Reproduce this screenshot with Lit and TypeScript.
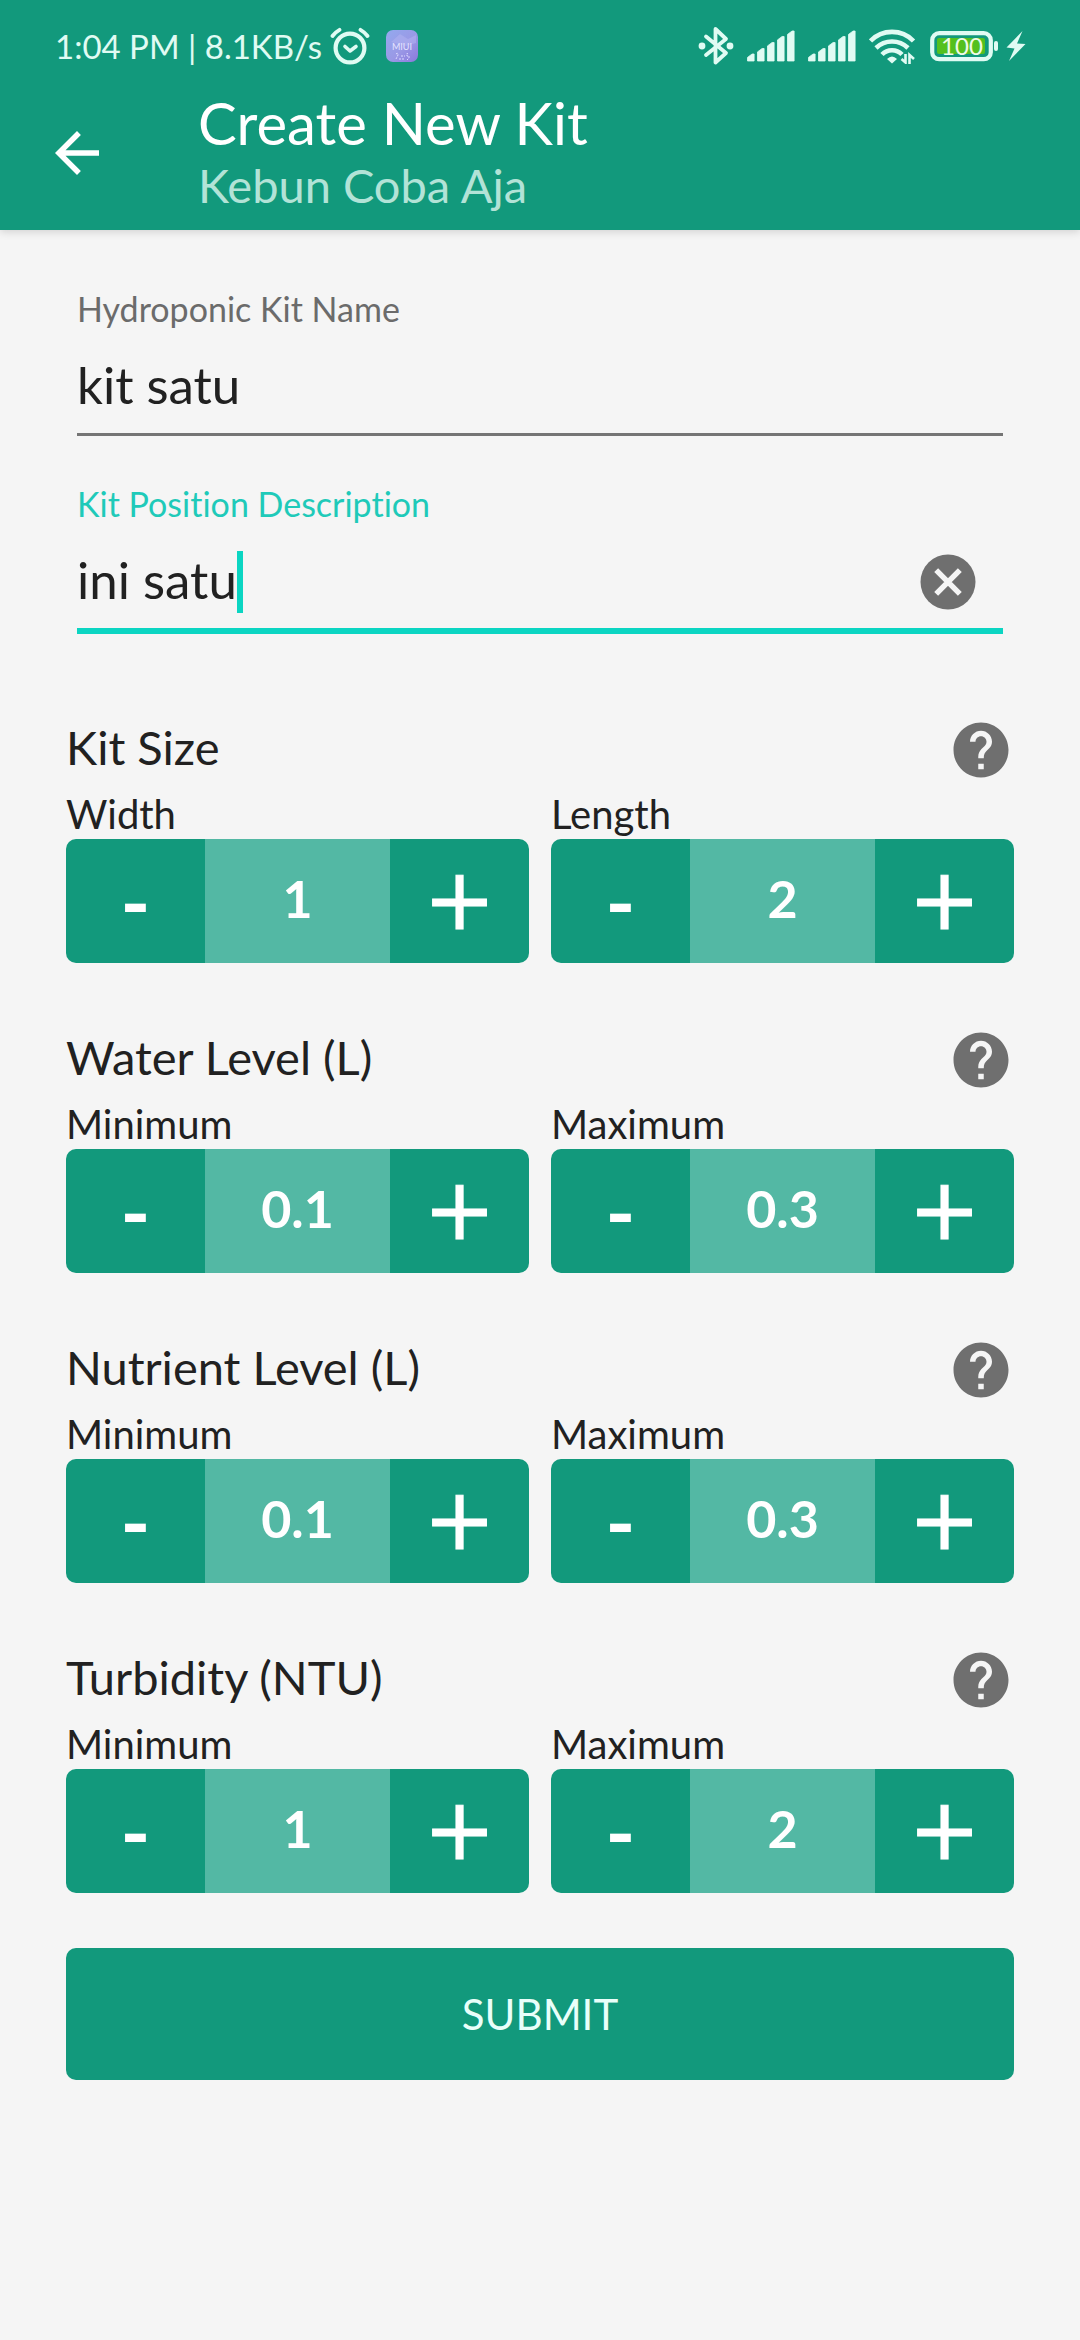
import { LitElement, html, css, svg, nothing } from "lit";
import { customElement, property, state } from "lit/decorators.js";
import { classMap } from "lit/directives/class-map.js";

/* Shared control reset */
const reset = css`
  * {
    box-sizing: border-box;
  }
  svg {
    display: block;
    flex: none;
  }
  button,
  input {
    margin: 0;
    padding: 0;
    border: 0;
    outline: 0;
    background: none;
    color: inherit;
    font: inherit;
  }
  button {
    cursor: pointer;
  }
`;

@customElement("status-bar")
class StatusBar extends LitElement {
  static styles = [
    reset,
    css`
      :host {
        display: flex;
        align-items: center;
        height: 76px;
        padding: 16px 54px 0 55px;
        color: #e0fbf3;
        font-size: 33px;
        line-height: 40px;
      }
      .alarm {
        margin-left: 8px;
      }
      .app {
        margin-left: 16px;
      }
      .right {
        display: flex;
        align-items: center;
        gap: 13px;
        margin-left: auto;
      }
      .power {
        display: flex;
        align-items: center;
        gap: 8px;
      }
      .glyph {
        font: 24px "Lato", sans-serif;
      }
      .tiny {
        font: 9px "Lato", sans-serif;
      }
    `,
  ];

  private signal() {
    return html`<svg width="48" height="32" viewBox="0 0 48 32" fill="currentColor" aria-hidden="true">
      ${[24, 18.5, 12.5, 6.5, 1].map((top, i) => {
        const x = i * 10 + 0.5;
        return svg`<path d="M${x} 31V${top + 3.4}L${x + 4.6} ${top}H${x + 6.6}V31Z" stroke="currentColor" stroke-width="0.8" stroke-linejoin="round" />`;
      })}
    </svg>`;
  }

  render() {
    return html`
      <span>1:04 PM | 8.1KB/s</span>
      <svg class="alarm" width="40" height="38" viewBox="0 0 40 38" fill="none" stroke="currentColor" stroke-linecap="round" aria-hidden="true">
        <circle cx="20" cy="21" r="14.4" stroke-width="4.2" />
        <path d="M15 19.5L20 24L26 19.5" stroke-width="3.6" stroke-linejoin="round" />
        <path d="M2.5 9Q5.5 5 9.5 2.8M30.5 2.8Q34.5 5 37.5 9" stroke-width="3.8" />
      </svg>
      <svg class="app" width="32" height="32" viewBox="0 0 32 32" aria-hidden="true">
        <defs>
          <linearGradient id="tile" x1="0" y1="0" x2="1" y2="1">
            <stop offset="0" stop-color="#93a9ee" />
            <stop offset="0.55" stop-color="#9a99e6" />
            <stop offset="1" stop-color="#8a78dc" />
          </linearGradient>
        </defs>
        <rect width="32" height="32" rx="7" fill="url(#tile)" />
        <path d="M5 12L14 4L22 9L30 5V13L20 16Z" fill="#b3b4f2" opacity="0.5" />
        <text class="tiny" x="16" y="20" text-anchor="middle" fill="#e6e4ff">MIUI</text>
        <path d="M10 24Q12 22 12 25L10 29M15 26H19M22 24Q20 22 21 26H23V28L21 30M13 29H19" fill="none" stroke="#dcd9ff" stroke-width="1" stroke-dasharray="2 1" />
      </svg>
      <div class="right">
        <svg width="36" height="40" viewBox="0 0 36 40" fill="none" stroke="currentColor" stroke-width="3.8" stroke-linejoin="round" stroke-linecap="round" aria-hidden="true">
          <path d="M8 10.5L28 27L17.5 36.5V3L28 13L8 29" />
          <circle cx="4" cy="20" r="3.4" fill="currentColor" stroke="none" />
          <circle cx="32" cy="20" r="3.4" fill="currentColor" stroke="none" />
        </svg>
        ${this.signal()} ${this.signal()}
        <svg width="48" height="36" viewBox="0 0 48 36" fill="none" stroke="currentColor" stroke-width="4.6" aria-hidden="true">
          <path d="M1.5 13A30 30 0 0 1 44.5 13" />
          <path d="M7 20A23 23 0 0 1 39 20" />
          <path d="M13 26.5A14 14 0 0 1 33 26.5" />
          <path d="M18 31Q23 26 28 31L23 35.5Z" fill="currentColor" stroke="none" />
          <path d="M36.5 26V34.5L32.5 31M40.5 36V27L45 31" stroke-width="2.6" />
        </svg>
        <div class="power">
          <svg width="68" height="32" viewBox="0 0 68 32" aria-label="Battery 100">
            <rect x="2.2" y="3.2" width="58.6" height="26" rx="7" fill="none" stroke="currentColor" stroke-width="4.2" />
            <rect x="64" y="11" width="4" height="10" rx="2" fill="currentColor" />
            <rect x="7" y="8" width="48" height="16" rx="2" fill="#54c01e" />
            <text class="glyph" x="32" y="25" text-anchor="middle" fill="#effbe9">100</text>
          </svg>
          <svg width="20" height="32" viewBox="0 0 20 32" fill="currentColor" aria-hidden="true">
            <path d="M16.5 1L0.5 17.5L8.5 18.5L3 31L19.5 14L11 13.5Z" />
          </svg>
        </div>
      </div>
    `;
  }
}

@customElement("text-field")
class TextField extends LitElement {
  @property() label = "";
  @property() value = "";
  @property({ type: Boolean, reflect: true }) active = false;

  static styles = [
    reset,
    css`
      :host {
        display: block;
      }
      .label {
        display: block;
        color: #6b6b6b;
        font-size: 34px;
        line-height: 42px;
      }
      .row {
        display: flex;
        align-items: center;
        box-sizing: content-box;
        height: 92px;
        padding: 11px 22px 0 0;
        border-bottom: 3px solid #757575;
      }
      .input {
        flex: 1;
        min-width: 0;
        padding-bottom: 4px;
        color: #212121;
        font-size: 51px;
        line-height: 62px;
      }
      .caret {
        width: 6px;
        height: 62px;
        background: #0bd5c2;
      }
      .clear {
        margin-left: auto;
        color: #6f6f6f;
      }
      .active .label {
        color: #1fcab9;
      }
      .active .row {
        border-bottom: 6px solid #0bd5c2;
      }
      .active .input {
        flex: none;
        field-sizing: content;
        caret-color: transparent;
      }
    `,
  ];

  render() {
    return html`<div class=${classMap({ active: this.active })}>
      <label class="label" for="text">${this.label}</label>
      <div class="row">
        <input
          id="text"
          class="input"
          type="text"
          .value=${this.value}
          @input=${(e: Event) => (this.value = (e.target as HTMLInputElement).value)}
        />
        ${this.active
          ? html`<span class="caret"></span>
              <button class="clear" type="button" aria-label="Clear" @click=${() => (this.value = "")}>
                <svg width="66" height="66" viewBox="0 0 24 24" fill="none" aria-hidden="true">
                  <circle cx="12" cy="12" r="10" fill="currentColor" />
                  <path d="M7.7 7.7L16.3 16.3M16.3 7.7L7.7 16.3" stroke="#f5f5f5" stroke-width="2" />
                </svg>
              </button>`
          : nothing}
      </div>
    </div>`;
  }
}

@customElement("number-stepper")
class NumberStepper extends LitElement {
  @property() label = "";
  @property({ type: Number }) value = 0;
  @property({ type: Number }) step = 1;

  static styles = [
    reset,
    css`
      :host {
        display: block;
        min-width: 0;
      }
      .label {
        display: block;
        padding: 7px 0 1px;
        color: #212121;
        font-size: 40px;
        line-height: 48px;
      }
      .stepper {
        display: grid;
        grid-template-columns: 3fr 4fr 3fr;
        height: 124px;
        border-radius: 10px;
        background: #12997c;
        color: #ffffff;
      }
      .value {
        min-width: 0;
        padding-bottom: 6px;
        background: #53b8a4;
        text-align: center;
        font-size: 52px;
        font-weight: 700;
      }
      .minus {
        font-size: 80px;
        font-weight: 700;
      }
      .plus {
        padding-bottom: 4px;
        font-family: "DejaVu Sans", sans-serif;
        font-size: 86px;
        -webkit-text-stroke: 1px currentColor;
      }
    `,
  ];

  private change(sign: number) {
    this.value = Math.max(0, Math.round((this.value + sign * this.step) * 10) / 10);
  }

  render() {
    return html`
      <label class="label" for="value">${this.label}</label>
      <div class="stepper">
        <button class="minus" type="button" aria-label="Decrease" @click=${() => this.change(-1)}>-</button>
        <input
          id="value"
          class="value"
          inputmode="decimal"
          .value=${String(this.value)}
          @change=${(e: Event) => (this.value = Number((e.target as HTMLInputElement).value) || 0)}
        />
        <button class="plus" type="button" aria-label="Increase" @click=${() => this.change(1)}>+</button>
      </div>
    `;
  }
}

interface Range {
  title: string;
  step: number;
  items: { label: string; value: number }[];
}

@customElement("app-root")
class AppRoot extends LitElement {
  @state() private ranges: Range[] = [
    { title: "Kit Size", step: 1, items: [{ label: "Width", value: 1 }, { label: "Length", value: 2 }] },
    { title: "Water Level (L)", step: 0.1, items: [{ label: "Minimum", value: 0.1 }, { label: "Maximum", value: 0.3 }] },
    { title: "Nutrient Level (L)", step: 0.1, items: [{ label: "Minimum", value: 0.1 }, { label: "Maximum", value: 0.3 }] },
    { title: "Turbidity (NTU)", step: 1, items: [{ label: "Minimum", value: 1 }, { label: "Maximum", value: 2 }] },
  ];

  static styles = [
    reset,
    css`
      :host {
        display: block;
        min-height: 100vh;
        background: #f5f5f5;
        color: #212121;
        font-family: "Lato", "Open Sans", sans-serif;
        font-variant-ligatures: none;
      }
      .header {
        background: #12997c;
        color: #ffffff;
        box-shadow: 0 2px 8px rgba(0, 0, 0, 0.14);
      }
      .toolbar {
        display: flex;
        align-items: center;
        gap: 88px;
        height: 154px;
        padding: 0 44px;
      }
      .title,
      .subtitle {
        margin: 0;
        font-weight: 400;
      }
      .title {
        font-size: 58px;
        line-height: 64px;
      }
      .subtitle {
        color: #b2e3d7;
        font-size: 47px;
        line-height: 60px;
      }
      .form {
        padding: 58px 66px;
      }
      .fields {
        display: grid;
        gap: 47px;
        padding: 0 11px;
      }
      .sections {
        display: grid;
        gap: 64px;
        margin: 83px 0 55px;
      }
      .heading {
        display: flex;
        align-items: flex-start;
        justify-content: space-between;
      }
      .name {
        margin: 0;
        font-size: 47px;
        font-weight: 400;
        line-height: 60px;
      }
      .help {
        color: #6f6f6f;
      }
      .pair {
        display: grid;
        grid-template-columns: 1fr 1fr;
        gap: 22px;
      }
      .submit {
        display: block;
        width: 100%;
        height: 132px;
        border-radius: 10px;
        background: #12997c;
        color: #e9fffa;
        font-size: 42px;
      }
    `,
  ];

  render() {
    return html`
      <header class="header">
        <status-bar></status-bar>
        <div class="toolbar">
          <button type="button" aria-label="Back">
            <svg width="66" height="66" viewBox="0 0 24 24" fill="currentColor" aria-hidden="true">
              <path d="M20 11H7.83l5.59-5.59L12 4l-8 8 8 8 1.41-1.41L7.83 13H20v-2z" />
            </svg>
          </button>
          <div>
            <h1 class="title">Create New Kit</h1>
            <p class="subtitle">Kebun Coba Aja</p>
          </div>
        </div>
      </header>
      <form class="form" @submit=${(e: Event) => e.preventDefault()}>
        <div class="fields">
          <text-field label="Hydroponic Kit Name" value="kit satu"></text-field>
          <text-field label="Kit Position Description" value="ini satu" active></text-field>
        </div>
        <div class="sections">
          ${this.ranges.map(
            (range) => html`<section>
              <div class="heading">
                <h2 class="name">${range.title}</h2>
                <button class="help" type="button" aria-label="Help">
                  <svg width="66" height="66" viewBox="0 0 24 24" fill="currentColor" aria-hidden="true">
                    <path
                      d="M12 2C6.48 2 2 6.48 2 12s4.48 10 10 10 10-4.48 10-10S17.52 2 12 2zm1 17h-2v-2h2v2zm2.07-7.75l-.9.92C13.45 12.9 13 13.5 13 15h-2v-.5c0-1.1.45-2.1 1.17-2.83l1.24-1.26c.37-.36.59-.86.59-1.41 0-1.1-.9-2-2-2s-2 .9-2 2H8c0-2.21 1.79-4 4-4s4 1.79 4 4c0 .88-.36 1.68-.93 2.25z"
                    />
                  </svg>
                </button>
              </div>
              <div class="pair">
                ${range.items.map(
                  (item) => html`<number-stepper label=${item.label} value=${item.value} step=${range.step}></number-stepper>`
                )}
              </div>
            </section>`
          )}
        </div>
        <button class="submit" type="submit">SUBMIT</button>
      </form>
    `;
  }
}
